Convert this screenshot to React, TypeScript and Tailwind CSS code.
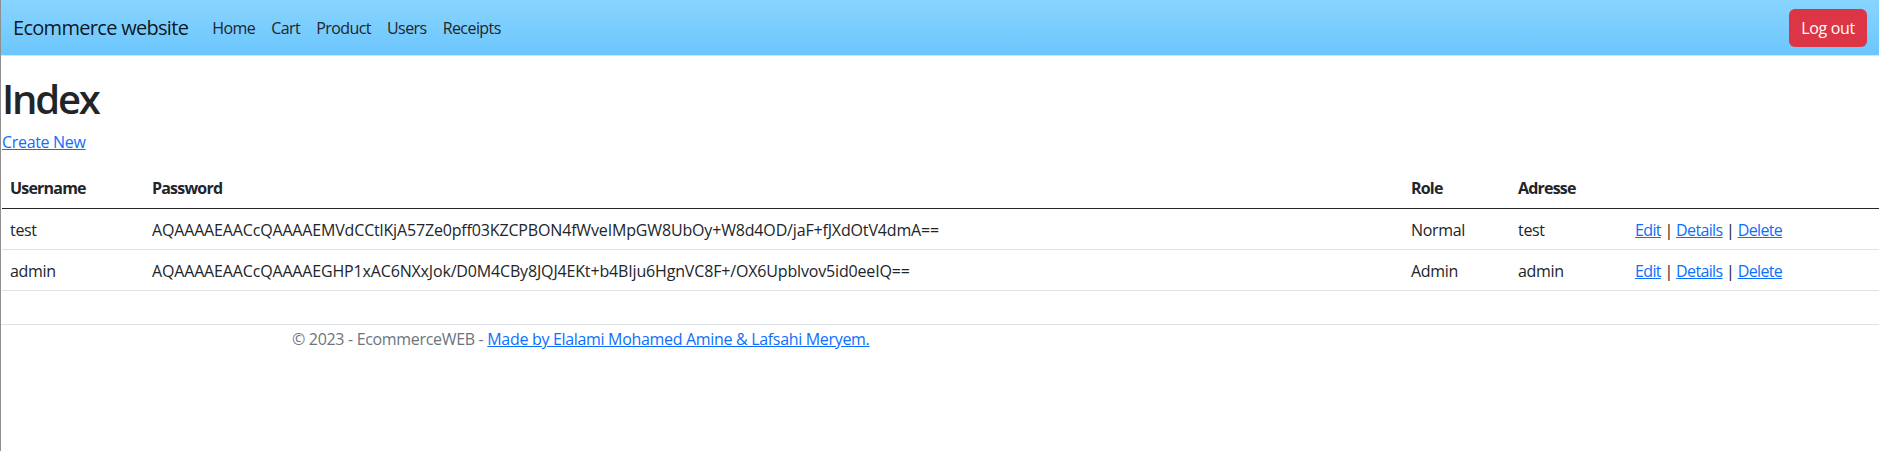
import React from "react";

const rows = [
  {
    username: "test",
    password: "AQAAAAEAACcQAAAAEMVdCCtlKjA57Ze0pff03KZCPBON4fWveIMpGW8UbOy+W8d4OD/jaF+fJXdOtV4dmA==",
    role: "Normal",
    adresse: "test",
  },
  {
    username: "admin",
    password: "AQAAAAEAACcQAAAAEGHP1xAC6NXxJok/D0M4CBy8JQJ4EKt+b4BIju6HgnVC8F+/OX6Upblvov5id0eeIQ==",
    role: "Admin",
    adresse: "admin",
  },
];

export default function App() {
  return (
    <div className="min-h-screen bg-white border-l border-[#8f8f8f] text-[#212529] text-[16px] leading-[24px] tracking-[-0.02em] font-['Open_Sans',_'Noto_Sans',_sans-serif]">
      <header>
        <nav className="flex h-[56px] items-center justify-between border-b border-[#dee2e6] bg-gradient-to-b from-[#88d4ff] to-[#6cc6fd] px-3">
          <div className="flex items-center">
            <a className="mr-4 text-[20px] leading-[30px] tracking-[-0.035em] text-black/90 no-underline" href="#">
              Ecommerce website
            </a>
            <ul className="flex items-center tracking-[-0.035em]">
              {["Home", "Cart", "Product", "Users", "Receipts"].map((l) => (
                <li key={l}>
                  <a className="block px-2 py-2 text-[#212529] no-underline" href="#">
                    {l}
                  </a>
                </li>
              ))}
            </ul>
          </div>
          <button className="h-[38px] rounded-md bg-[#dc3545] px-3 text-white">Log out</button>
        </nav>
      </header>
      <main className="mt-4 pb-4 pl-[1px]">
        <h1 className="mb-[7px] pt-[3px] text-[40px] font-semibold leading-[48px] tracking-[-0.055em]">Index</h1>
        <p className="mb-[14px]">
          <a href="#" className="text-[#0d6efd] underline">
            Create New
          </a>
        </p>
        <table className="mb-[17px] w-full border-collapse text-left">
          <thead>
            <tr className="border-b border-[#212529]">
              <th className="w-[142px] p-2 font-bold tracking-[-0.05em]">Username</th>
              <th className="w-[1259px] p-2 font-bold tracking-[-0.05em]">Password</th>
              <th className="w-[107px] p-2 font-bold tracking-[-0.05em]">Role</th>
              <th className="w-[117px] p-2 font-bold tracking-[-0.05em]">Adresse</th>
              <th className="p-2"></th>
            </tr>
          </thead>
          <tbody>
            {rows.map((r) => (
              <tr key={r.username} className="border-b border-[#dee2e6]">
                <td className="px-2 pt-[9px] pb-[7px]">{r.username}</td>
                <td className="px-2 pt-[9px] pb-[7px] tracking-[-0.01em]">{r.password}</td>
                <td className="px-2 pt-[9px] pb-[7px]">{r.role}</td>
                <td className="px-2 pt-[9px] pb-[7px]">{r.adresse}</td>
                <td className="px-2 pt-[9px] pb-[7px] tracking-[-0.04em]">
                  <a href="#" className="text-[#0d6efd] underline">Edit</a> |{" "}
                  <a href="#" className="text-[#0d6efd] underline">Details</a> |{" "}
                  <a href="#" className="text-[#0d6efd] underline">Delete</a>
                </td>
              </tr>
            ))}
          </tbody>
        </table>
      </main>
      <footer className="border-t border-[#dee2e6] leading-[28px] text-[#6c757d]">
        <div className="mx-auto max-w-[1320px] whitespace-nowrap px-3">
          © 2023 - EcommerceWEB -{" "}
          <a href="#" className="text-[#0d6efd] underline">
            Made by Elalami Mohamed Amine &amp; Lafsahi Meryem.
          </a>
        </div>
      </footer>
    </div>
  );
}
